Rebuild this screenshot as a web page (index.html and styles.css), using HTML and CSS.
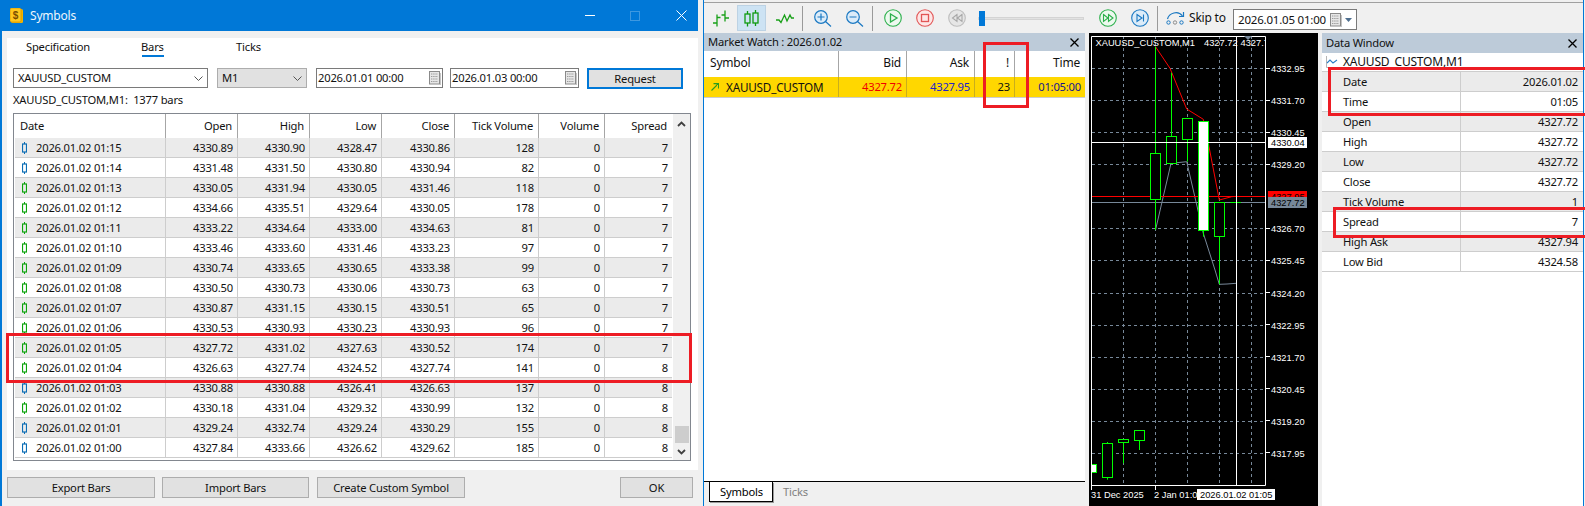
FILE: index.html
```html
<!DOCTYPE html>
<html lang="en">
<head>
<meta charset="utf-8">
<title>Symbols</title>
<link rel="stylesheet" href="styles.css">
</head>
<body>
<svg class="defs" width="0" height="0" aria-hidden="true">
  <symbol id="cdl" viewBox="0 0 5 12"><path d="M2.5 0v2M2.5 10v2" stroke="currentColor" fill="none"/><rect x=".5" y="2" width="4" height="8" stroke="currentColor" fill="none" stroke-width="1.2"/></symbol>
  <symbol id="chev" viewBox="0 0 9 5"><path d="M.5.5l4 4 4-4" stroke="#555" fill="none"/></symbol>
  <symbol id="cal" viewBox="0 0 12 14"><rect x=".5" y=".5" width="10" height="12.5" fill="#e6e6e6" stroke="#8a8a8a"/><path d="M2 3h7M2 5.5h7M2 8h7M2 10.5h7" stroke="#9a9a9a" stroke-dasharray="1.4 .8"/><path d="M11.5 2v12H2" stroke="#c4c4c4" fill="none"/></symbol>
</svg>
<div class="screen">
  <section class="dialog">
    <header class="titlebar">
      <svg class="appicon" width="14" height="15" viewBox="0 0 14 15"><rect x="1" y="1" width="12" height="14" rx="1.5" fill="#f5b400"/><rect x="0" y="0" width="11" height="14" rx="1.5" fill="#ffc81e" stroke="#c88a00" stroke-width=".6"/><text x="5.5" y="11" class="dollar">$</text></svg>
      <span class="titletext">Symbols</span>
      <span class="winctl min"></span>
      <span class="winctl max"></span>
      <svg class="winclose" width="11" height="11" viewBox="0 0 11 11"><path d="M.5.5l10 10M10.500.5l-10 10" stroke="#fff"/></svg>
    </header>
    <div class="panel">
      <nav class="tabs">
        <span class="tab t-spec">Specification</span>
        <span class="tab t-bars">Bars</span>
        <span class="tab t-ticks">Ticks</span>
      </nav>
      <div class="controls">
        <div class="field combo"><span>XAUUSD_CUSTOM</span><svg class="chev" width="9" height="5"><use href="#chev"/></svg></div>
        <div class="field period"><span>M1</span><svg class="chev" width="9" height="5"><use href="#chev"/></svg></div>
        <div class="field datef"><span>2026.01.01 00:00</span><svg width="12" height="14"><use href="#cal"/></svg></div>
        <div class="field datef"><span>2026.01.03 00:00</span><svg width="12" height="14"><use href="#cal"/></svg></div>
        <button class="request">Request</button>
      </div>
      <p class="count">XAUUSD_CUSTOM,M1:&nbsp; 1377 bars</p>
      <div class="gridbox">
        <div class="table">
          <div class="thead"><span class="l">Date</span><span>Open</span><span>High</span><span>Low</span><span>Close</span><span>Tick Volume</span><span>Volume</span><span>Spread</span></div>
          <div class="tr"><span class="d dn"><svg width="5" height="12"><use href="#cdl"/></svg>2026.01.02 01:15</span><span>4330.89</span><span>4330.90</span><span>4328.47</span><span>4330.86</span><span>128</span><span>0</span><span>7</span></div>
          <div class="tr"><span class="d dn"><svg width="5" height="12"><use href="#cdl"/></svg>2026.01.02 01:14</span><span>4331.48</span><span>4331.50</span><span>4330.80</span><span>4330.94</span><span>82</span><span>0</span><span>7</span></div>
          <div class="tr"><span class="d up"><svg width="5" height="12"><use href="#cdl"/></svg>2026.01.02 01:13</span><span>4330.05</span><span>4331.94</span><span>4330.05</span><span>4331.46</span><span>118</span><span>0</span><span>7</span></div>
          <div class="tr"><span class="d up"><svg width="5" height="12"><use href="#cdl"/></svg>2026.01.02 01:12</span><span>4334.66</span><span>4335.51</span><span>4329.64</span><span>4330.05</span><span>178</span><span>0</span><span>7</span></div>
          <div class="tr"><span class="d up"><svg width="5" height="12"><use href="#cdl"/></svg>2026.01.02 01:11</span><span>4333.22</span><span>4334.64</span><span>4333.00</span><span>4334.63</span><span>81</span><span>0</span><span>7</span></div>
          <div class="tr"><span class="d up"><svg width="5" height="12"><use href="#cdl"/></svg>2026.01.02 01:10</span><span>4333.46</span><span>4333.60</span><span>4331.46</span><span>4333.23</span><span>97</span><span>0</span><span>7</span></div>
          <div class="tr"><span class="d up"><svg width="5" height="12"><use href="#cdl"/></svg>2026.01.02 01:09</span><span>4330.74</span><span>4333.65</span><span>4330.65</span><span>4333.38</span><span>99</span><span>0</span><span>7</span></div>
          <div class="tr"><span class="d up"><svg width="5" height="12"><use href="#cdl"/></svg>2026.01.02 01:08</span><span>4330.50</span><span>4330.73</span><span>4330.06</span><span>4330.73</span><span>63</span><span>0</span><span>7</span></div>
          <div class="tr"><span class="d up"><svg width="5" height="12"><use href="#cdl"/></svg>2026.01.02 01:07</span><span>4330.87</span><span>4331.15</span><span>4330.15</span><span>4330.51</span><span>65</span><span>0</span><span>7</span></div>
          <div class="tr"><span class="d up"><svg width="5" height="12"><use href="#cdl"/></svg>2026.01.02 01:06</span><span>4330.53</span><span>4330.93</span><span>4330.23</span><span>4330.93</span><span>96</span><span>0</span><span>7</span></div>
          <div class="tr"><span class="d up"><svg width="5" height="12"><use href="#cdl"/></svg>2026.01.02 01:05</span><span>4327.72</span><span>4331.02</span><span>4327.63</span><span>4330.52</span><span>174</span><span>0</span><span>7</span></div>
          <div class="tr"><span class="d up"><svg width="5" height="12"><use href="#cdl"/></svg>2026.01.02 01:04</span><span>4326.63</span><span>4327.74</span><span>4324.52</span><span>4327.74</span><span>141</span><span>0</span><span>8</span></div>
          <div class="tr"><span class="d dn"><svg width="5" height="12"><use href="#cdl"/></svg>2026.01.02 01:03</span><span>4330.88</span><span>4330.88</span><span>4326.41</span><span>4326.63</span><span>137</span><span>0</span><span>8</span></div>
          <div class="tr"><span class="d up"><svg width="5" height="12"><use href="#cdl"/></svg>2026.01.02 01:02</span><span>4330.18</span><span>4331.04</span><span>4329.32</span><span>4330.99</span><span>132</span><span>0</span><span>8</span></div>
          <div class="tr"><span class="d dn"><svg width="5" height="12"><use href="#cdl"/></svg>2026.01.02 01:01</span><span>4329.24</span><span>4332.74</span><span>4329.24</span><span>4330.29</span><span>155</span><span>0</span><span>8</span></div>
          <div class="tr"><span class="d dn"><svg width="5" height="12"><use href="#cdl"/></svg>2026.01.02 01:00</span><span>4327.84</span><span>4333.66</span><span>4326.62</span><span>4329.62</span><span>185</span><span>0</span><span>8</span></div>
        </div>
        <div class="scroll">
          <svg class="sarrow" width="9" height="6" viewBox="0 0 9 6"><path d="M1 5l3.500-3.500L8 5" stroke="#404040" stroke-width="1.800" fill="none"/></svg>
          <div class="thumb"></div>
          <svg class="sarrow" width="9" height="6" viewBox="0 0 9 6"><path d="M1 1l3.500 3.500L8 1" stroke="#404040" stroke-width="1.800" fill="none"/></svg>
        </div>
      </div>
    </div>
    <footer class="footer">
      <button class="btn b-export">Export Bars</button>
      <button class="btn b-import">Import Bars</button>
      <button class="btn b-custom">Create Custom Symbol</button>
      <button class="btn b-ok">OK</button>
    </footer>
  </section>

  <section class="terminal">
    <div class="toolbar">
      <span class="tool"><svg width="18" height="17" viewBox="0 0 18 17" fill="none" stroke="#18a018" stroke-width="1.300"><path d="M5 4.500v12M1 13h4M5 7.500h3.500M13 .5v11M9.500 5H13M13 8h4"/></svg></span>
      <span class="tool on"><svg width="15" height="17" viewBox="0 0 15 17" fill="none" stroke="#0f9a0f" stroke-width="1.300"><path d="M3.500 1v3M3.500 13v3.500M11.500 0v3M11.500 13v3"/><rect x="1" y="4" width="5" height="9"/><rect x="9" y="3" width="5" height="10"/></svg></span>
      <span class="tool"><svg width="18" height="11" viewBox="0 0 18 11" fill="none" stroke="#18a018" stroke-width="1.300"><path d="M0 7h3l2 2.500L8.500 2l2.500 6 3-6 1.500 3H18"/></svg></span>
      <span class="sep"></span>
      <span class="tool"><svg width="18" height="17" viewBox="0 0 18 17" fill="none" stroke="#1a78c2" stroke-width="1.200"><circle cx="7" cy="7" r="6.300" fill="#dcecf9"/><path d="M11.500 11.500l5.500 5M3.500 7h7M7 3.500v7"/></svg></span>
      <span class="tool"><svg width="18" height="17" viewBox="0 0 18 17" fill="none" stroke="#1a78c2" stroke-width="1.200"><circle cx="7" cy="7" r="6.300" fill="#dcecf9"/><path d="M11.500 11.500l5.500 5M3.500 7h7"/></svg></span>
      <span class="sep"></span>
      <span class="tool"><svg width="18" height="18" viewBox="0 0 18 18" fill="none" stroke="#2cb04c" stroke-width="1.100"><circle cx="9" cy="9" r="8.300" fill="#edf9ef"/><path d="M6.500 5l6.500 4-6.500 4z" stroke-width="1.300"/></svg></span>
      <span class="tool"><svg width="18" height="18" viewBox="0 0 18 18" fill="none" stroke="#e25555" stroke-width="1.100"><circle cx="9" cy="9" r="8.300" fill="#fde6e6"/><rect x="5.500" y="5.500" width="7" height="7" stroke-width="1.300"/></svg></span>
      <span class="tool"><svg width="18" height="18" viewBox="0 0 18 18" fill="none" stroke="#bdbdbd" stroke-width="1.100"><circle cx="9" cy="9" r="8.300" fill="#e6e6e6"/><path d="M9 5.500L4.500 9 9 12.500zM14 5.500L9.500 9l4.500 3.500z" stroke="#a8a8a8"/></svg></span>
      <div class="slider"><span class="knob"></span></div>
      <span class="tool"><svg width="18" height="18" viewBox="0 0 18 18" fill="none" stroke="#2cb04c" stroke-width="1.100"><circle cx="9" cy="9" r="8.300" fill="#edf9ef"/><path d="M4.500 5.500L9 9l-4.500 3.500zM9.500 5.500L14 9l-4.500 3.500z"/></svg></span>
      <span class="tool"><svg width="18" height="18" viewBox="0 0 18 18" fill="none" stroke="#1a78c2" stroke-width="1.100"><circle cx="9" cy="9" r="8.300" fill="#dcecf9"/><path d="M6 5.500L11 9l-5 3.500zM12.500 5.500v7"/></svg></span>
      <span class="sep"></span>
      <svg class="skipicon" width="20" height="14" viewBox="0 0 20 14" fill="none"><path d="M1.500 8C3 2 12 -1 16.500 5" stroke="#1a78c2" stroke-width="1.200"/><path d="M13 5.500h4.500V1" stroke="#1a78c2" stroke-width="1.200"/><circle cx="2.500" cy="11.500" r="1.700" stroke="#1a78c2"/><circle cx="9" cy="11.500" r="1.700" stroke="#8c8c8c"/><circle cx="15.500" cy="11.500" r="1.700" stroke="#1a78c2"/></svg>
      <span class="skiplabel">Skip to</span>
      <div class="skipdate"><span>2026.01.05 01:00</span><svg width="12" height="14"><use href="#cal"/></svg><svg class="tri" width="7" height="4" viewBox="0 0 7 4"><path d="M0 0h7L3.500 4z" fill="#4f6f8f"/></svg></div>
    </div>

    <div class="workspace">
      <div class="watch">
        <div class="phead"><span>Market Watch : 2026.01.02</span><svg width="9" height="9" viewBox="0 0 9 9"><path d="M.5.5l8 8M8.500.5l-8 8" stroke="#000" stroke-width="1.300"/></svg></div>
        <div class="wbody">
          <div class="whead"><span class="l">Symbol</span><span>Bid</span><span>Ask</span><span>!</span><span>Time</span></div>
          <div class="wrow"><span class="l"><svg width="8" height="8" viewBox="0 0 8 8" fill="none" stroke="#2d9c1e" stroke-width="1.100"><path d="M.5 7.500l7-7M2.500.6h5v5"/></svg>XAUUSD_CUSTOM</span><span class="bid">4327.72</span><span class="ask">4327.95</span><span>23</span><span class="tm">01:05:00</span></div>
        </div>
        <div class="wtabs"><span class="wtab on">Symbols</span><span class="wtab">Ticks</span></div>
      </div>

      <svg class="chart" width="229" height="473" viewBox="1089 33 229 473">
        <defs><clipPath id="frameclip"><rect x="1092" y="37" width="173" height="14"/></clipPath></defs>
        <rect x="1089" y="33" width="229" height="473" fill="#000"/>
        <g class="grid">
          <path d="M1092 68.500H1265M1092 100.500H1265M1092 132.500H1265M1092 164.500H1265M1092 228.500H1265M1092 260.500H1265M1092 293.500H1265M1092 325.500H1265M1092 357.500H1265M1092 389.500H1265M1092 421.500H1265M1092 453.500H1265M1123.500 36V485M1155.500 36V485M1187.500 36V485M1219.500 36V485M1251.500 36V485"/>
        </g>
        <polyline class="ask-l" points="1155.500,46.700 1170,68.300 1186.700,109 1203.300,119.300 1209,146.700 1219.300,200 1231.700,196.700 1236.700,196.300"/>
        <polyline class="bid-l" points="1155.500,230 1171,163.300 1186.700,161.700 1203.300,233.300 1215,270 1219.300,284.300 1227,284 1236,283.300"/>
        <path class="hline red" d="M1092 196.500H1265"/>
        <path class="hline slate" d="M1092 202.500H1265"/>
        <g class="cs">
          <path d="M1155.500 46.700V153.500M1155.500 199.500V230M1171.500 72.700V136.500M1187.500 139.500V161.700M1203.500 230.500V236.700M1219.500 236.500V284.300M1230.300 202.500H1241M1107.500 442V443.500M1107.500 477.500V479.700M1123.500 442.500V463.300M1139.500 440.500V450"/>
          <rect x="1150.500" y="153.500" width="10" height="46"/>
          <rect x="1166.500" y="136.500" width="10" height="27"/>
          <rect x="1182.500" y="118.500" width="10" height="21"/>
          <rect class="w" x="1198.500" y="121.500" width="10" height="109"/>
          <rect x="1214.500" y="202.500" width="10" height="34"/>
          <rect class="w" x="1091.500" y="464.500" width="5" height="8"/>
          <rect x="1102.500" y="443.500" width="10" height="34"/>
          <rect x="1118.500" y="439.500" width="10" height="3"/>
          <rect x="1134.500" y="430.500" width="10" height="10"/>
        </g>
        <path class="frame" d="M1091.500 36.500H1265.500V485.500H1091.500ZM1236.500 36.500V485M1092 142.500H1265M1265.500 68.500H1270M1265.500 100.500H1270M1265.500 132.500H1270M1265.500 164.500H1270M1265.500 228.500H1270M1265.500 260.500H1270M1265.500 292.500H1270M1265.500 324.500H1270M1265.500 356.500H1270M1265.500 388.500H1270M1265.500 420.500H1270M1265.500 452.500H1270M1091.500 485V490M1155.500 485V490"/>
        <path d="M1244 36h8l-4 4z" fill="#778899"/>
        <g class="ctext">
          <text x="1095.500" y="46">XAUUSD_CUSTOM,M1</text>
          <text x="1204" y="46">4327.72</text>
          <text clip-path="url(#frameclip)" x="1240.500" y="46">4327.72</text>
          <text x="1271" y="72">4332.95</text>
          <text x="1271" y="104">4331.70</text>
          <text x="1271" y="136">4330.45</text>
          <text x="1271" y="168">4329.20</text>
          <text x="1271" y="232">4326.70</text>
          <text x="1271" y="264">4325.45</text>
          <text x="1271" y="297">4324.20</text>
          <text x="1271" y="329">4322.95</text>
          <text x="1271" y="361">4321.70</text>
          <text x="1271" y="393">4320.45</text>
          <text x="1271" y="425">4319.20</text>
          <text x="1271" y="457">4317.95</text>
          <text x="1091" y="498">31 Dec 2025</text>
          <text x="1154" y="498">2 Jan 01:0</text>
        </g>
        <rect x="1268" y="137" width="39" height="11" fill="#fff"/>
        <rect x="1268" y="191" width="39" height="11" fill="#f00"/>
        <g class="ctext dark"><text x="1271" y="200">4327.95</text></g>
        <rect x="1268" y="197" width="39" height="11" fill="#778899"/>
        <rect x="1197" y="489" width="78" height="11" fill="#fff"/>
        <g class="ctext dark">
          <text x="1271" y="146">4330.04</text>
          <text x="1271" y="206">4327.72</text>
          <text x="1200" y="498">2026.01.02 01:05</text>
        </g>
      </svg>

      <div class="datawin">
        <div class="phead"><span>Data Window</span><svg width="9" height="9" viewBox="0 0 9 9"><path d="M.5.5l8 8M8.500.5l-8 8" stroke="#000" stroke-width="1.300"/></svg></div>
        <div class="dsymbol"><svg width="12" height="12" viewBox="0 0 12 12" fill="none"><path d="M.5 0v11.500H12" stroke="#b5b5b5"/><path d="M1 7l3-3 3 3 4-3" stroke="#2a7fc6" stroke-width="1.100"/></svg><span>XAUUSD_CUSTOM,M1</span></div>
        <div class="dtable">
          <div class="dr"><span>Date</span><span>2026.01.02</span></div>
          <div class="dr"><span>Time</span><span>01:05</span></div>
          <div class="dr"><span>Open</span><span>4327.72</span></div>
          <div class="dr"><span>High</span><span>4327.72</span></div>
          <div class="dr"><span>Low</span><span>4327.72</span></div>
          <div class="dr"><span>Close</span><span>4327.72</span></div>
          <div class="dr"><span>Tick Volume</span><span>1</span></div>
          <div class="dr"><span>Spread</span><span>7</span></div>
          <div class="dr"><span>High Ask</span><span>4327.94</span></div>
          <div class="dr"><span>Low Bid</span><span>4324.58</span></div>
        </div>
      </div>
    </div>
  </section>

  <div class="mark m-rows"></div>
  <div class="mark m-spread-col"></div>
  <div class="mark m-date"></div>
  <div class="mark m-spread"></div>
</div>
</body>
</html>
```
FILE: styles.css
```css
* { box-sizing: border-box; }
html, body { margin: 0; padding: 0; }
body {
  width: 1585px;
  height: 506px;
  overflow: hidden;
  background: #f0f0f0;
  color: #111;
  font: 11.2px/16px "Noto Sans", "Liberation Sans", sans-serif;
  letter-spacing: -0.2px;
}
.defs { position: absolute; }
.screen { position: relative; display: flex; width: 1585px; height: 506px; overflow: hidden; }

/* dialog */
.dialog { width: 698px; height: 506px; display: flex; flex-direction: column; border-left: 2px solid #0078d7; background: #f0f0f0; flex: none; }
.titlebar { height: 31px; margin-left: -2px; background: #0078d7; color: #fff; display: flex; align-items: center; padding-left: 10px; flex: none; }
.appicon { flex: none; }
.dollar { font: bold 10px "Liberation Sans", sans-serif; fill: #7a4d00; text-anchor: middle; }
.titletext { margin-left: 6px; width: 45px; font-size: 12px; color: #eef6fc; }
.winctl { display: block; flex: none; }
.min { width: 10px; height: 1px; background: #fff; margin-left: 510px; }
.max { width: 10px; height: 10px; border: 1px solid #3d98e0; margin-left: 35px; }
.winclose { margin-left: 36px; flex: none; }

.panel { margin: 7px 0 0 5px; height: 432px; background: #fff; padding: 0 0 0 6px; flex: none; }
.tabs { height: 19px; position: relative; display: flex; }
.tab { display: block; height: 19px; padding-top: 1px; }
.t-spec { margin-left: 13px; width: 115px; }
.t-bars { width: 95px; background: linear-gradient(#0078d7, #0078d7) 1px 17px / 22px 2px no-repeat; }
.controls { display: flex; margin-top: 11px; height: 20px; }
.field { height: 20px; border: 1px solid #7a7a7a; background: #fff; display: flex; align-items: center; justify-content: space-between; white-space: nowrap; flex: none; }
.combo { width: 195px; padding: 0 4px; }
.period { width: 90px; margin-left: 9px; padding: 0 4px; background: #e1e1e1; border-color: #adadad; }
.datef { width: 127px; margin-left: 9px; padding: 0 1px; }
.datef + .datef { margin-left: 7px; width: 129px; }
.request { width: 96px; height: 21px; margin-left: 8px; background: #e1e1e1; border: 2px solid #0078d7; font: inherit; letter-spacing: inherit; color: inherit; padding: 0; }
.count { margin: 0; height: 25px; padding-top: 4px; white-space: nowrap; }
.gridbox { width: 678px; height: 348px; border: 1px solid #82878f; display: flex; }
.table { width: 658px; padding-left: 1px; flex: none; }
.thead, .tr { display: grid; grid-template-columns: 151px 72px 72px 72px 73px 84px 66px 67px; }
.thead { height: 24px; }
.thead span { display: block; text-align: right; padding: 4px 5px 0 0; border-right: 1px solid #a6a6a6; }
.thead span:last-child { border-right: 0; }
.thead .l { text-align: left; padding-left: 5px; }
.tr { height: 20px; border-bottom: 1px solid #cdcdcd; }
.tr:nth-child(even) { background: #ebebeb; }
.tr span { display: block; text-align: right; padding: 2px 4px 0 0; border-right: 1px solid #cdcdcd; }
.tr span:last-child { border-right: 0; }
.tr .d { display: flex; align-items: center; text-align: left; padding: 0 0 0 7px; gap: 9px; }
.d svg { flex: none; }
.up svg { color: #0ca30c; }
.dn svg { color: #0a6db5; }
.scroll { width: 18px; background: #f0f0f0; display: flex; flex-direction: column; align-items: center; padding: 7px 0 5px; margin-left: 1px; }
.sarrow { flex: none; }
.thumb { width: 14px; height: 17px; background: #cdcdcd; margin: auto 0 6px; }
.footer { display: flex; padding: 7px 0 0 5px; flex: none; }
.btn { height: 21px; background: #e1e1e1; border: 1px solid #adadad; font: inherit; letter-spacing: inherit; color: inherit; padding: 0; flex: none; }
.b-export { width: 148px; }
.b-import { width: 147px; margin-left: 7px; }
.b-custom { width: 148px; margin-left: 8px; }
.b-ok { width: 73px; margin-left: 155px; }

/* terminal */
.terminal { flex: none; width: 881px; height: 506px; margin-left: 5px; border-left: 1px solid #0078d7; border-right: 1px solid #0078d7; display: flex; flex-direction: column; background: #f0f0f0; }
.toolbar { height: 31px; flex: none; display: flex; align-items: center; border-top: 1px solid #a0a0a0; margin-top: 2px; padding-left: 2px; }
.tool { display: flex; align-items: center; justify-content: center; width: 29px; height: 26px; flex: none; }
.tool + .tool { margin-left: 3px; }
.tool.on { background: #cde3f4; border: 1px solid #bcd2e4; margin-right: 1px; }
.tool + .tool.on { margin-left: 2px; }
.sep { width: 1px; height: 25px; background: #9a9a9a; margin: 0 5px 0 3px; flex: none; }
.slider { width: 106px; height: 3px; background: #e2e2e2; border: 1px solid #d4d4d4; position: relative; margin: 0 9px 0 7px; flex: none; }
.knob { position: absolute; left: 0; top: -7px; width: 6px; height: 15px; background: #0078d7; }
.skipicon { flex: none; margin-left: 3px; }
.skiplabel { margin-left: 3px; width: 44px; font-size: 12px; flex: none; }
.skipdate { width: 124px; height: 21px; margin-top: 3px; background: #fff; border: 1px solid #7a7a7a; display: flex; align-items: center; padding-left: 4px; flex: none; white-space: nowrap; font-size: 11.5px; }
.skipdate span { width: 92px; flex: none; }
.skipdate .tri { margin-left: 3px; }

.workspace { display: flex; height: 473px; flex: none; }
.watch { width: 381px; display: flex; flex-direction: column; flex: none; }
.phead { height: 18px; background: #bdcbd9; display: flex; justify-content: space-between; align-items: center; padding: 0 6px 0 4px; white-space: nowrap; flex: none; }
.wbody { height: 430px; background: #fff; flex: none; }
.whead, .wrow { display: grid; grid-template-columns: 135px 68px 68px 40px 70px; }
.whead { height: 26px; }
.whead span { display: block; text-align: right; padding: 4px 5px 0 0; border-right: 1px solid #a6a6a6; font-size: 12px; }
.whead span:last-child { border-right: 0; }
.whead .l { text-align: left; padding-left: 6px; }
.wrow { height: 21px; background: #ffd700; border-bottom: 1px solid #cdcdcd; }
.wrow span { display: block; text-align: right; padding: 2px 4px 0 0; border-right: 1px solid #c9ae1c; }
.wrow span:last-child { border-right: 0; }
.wrow .l { display: flex; align-items: center; gap: 7px; padding: 0 0 0 7px; text-align: left; font-size: 11.7px; }
.bid { color: #f00000; }
.ask { color: #2222cc; }
.tm { color: #14148c; }
.wtabs { display: flex; border-top: 1px solid #000; padding-left: 5px; flex: none; height: 25px; }
.wtab { display: block; width: 64px; height: 20px; padding: 2px 0 0 10px; color: #808080; }
.wtab.on { background: #fff; color: #000; border: 1px solid #000; border-top: 0; box-shadow: 1px 1px 0 #9a9a9a; }
.chart { flex: none; margin-left: 4px; display: block; }
.grid path { stroke: #778899; fill: none; stroke-dasharray: 3 3; }
.ask-l { fill: none; stroke: #f00; }
.bid-l { fill: none; stroke: #778899; }
.hline { fill: none; }
.red { stroke: #f00; }
.slate { stroke: #778899; }
.cs path { stroke: #0f0; fill: none; }
.cs rect { stroke: #0f0; fill: #000; }
.cs rect.w { fill: #fff; }
.frame { stroke: #fff; fill: none; }
.ctext text { font: 9.3px "Liberation Sans", sans-serif; letter-spacing: 0; fill: #fff; }
.ctext.dark text { fill: #000; }

.datawin { width: 261px; margin-left: 4px; flex: none; background: #fff; }
.datawin .phead { height: 20px; }
.dsymbol { height: 18px; display: flex; align-items: center; padding-left: 4px; gap: 5px; font-size: 12px; white-space: nowrap; }
.dsymbol svg { flex: none; }
.dtable { border-top: 1px solid #cdcdcd; }
.dr { display: grid; grid-template-columns: 139px 1fr; height: 20px; border-bottom: 1px solid #cdcdcd; }
.dr:nth-child(odd) { background: #ebebeb; }
.dr span { display: block; padding: 2px 5px 0 0; }
.dr span:first-child { padding-left: 21px; border-right: 1px solid #cdcdcd; }
.dr span:last-child { text-align: right; }

/* red annotations drawn over the screenshot */
.mark { position: absolute; border: 3px solid #ed1c24; }
.m-rows { left: 6px; top: 333px; width: 686px; height: 50px; }
.m-spread-col { left: 983px; top: 42px; width: 46px; height: 66px; }
.m-date { left: 1328px; top: 67px; width: 270px; height: 49px; }
.m-spread { left: 1333px; top: 207px; width: 265px; height: 31px; }
```
